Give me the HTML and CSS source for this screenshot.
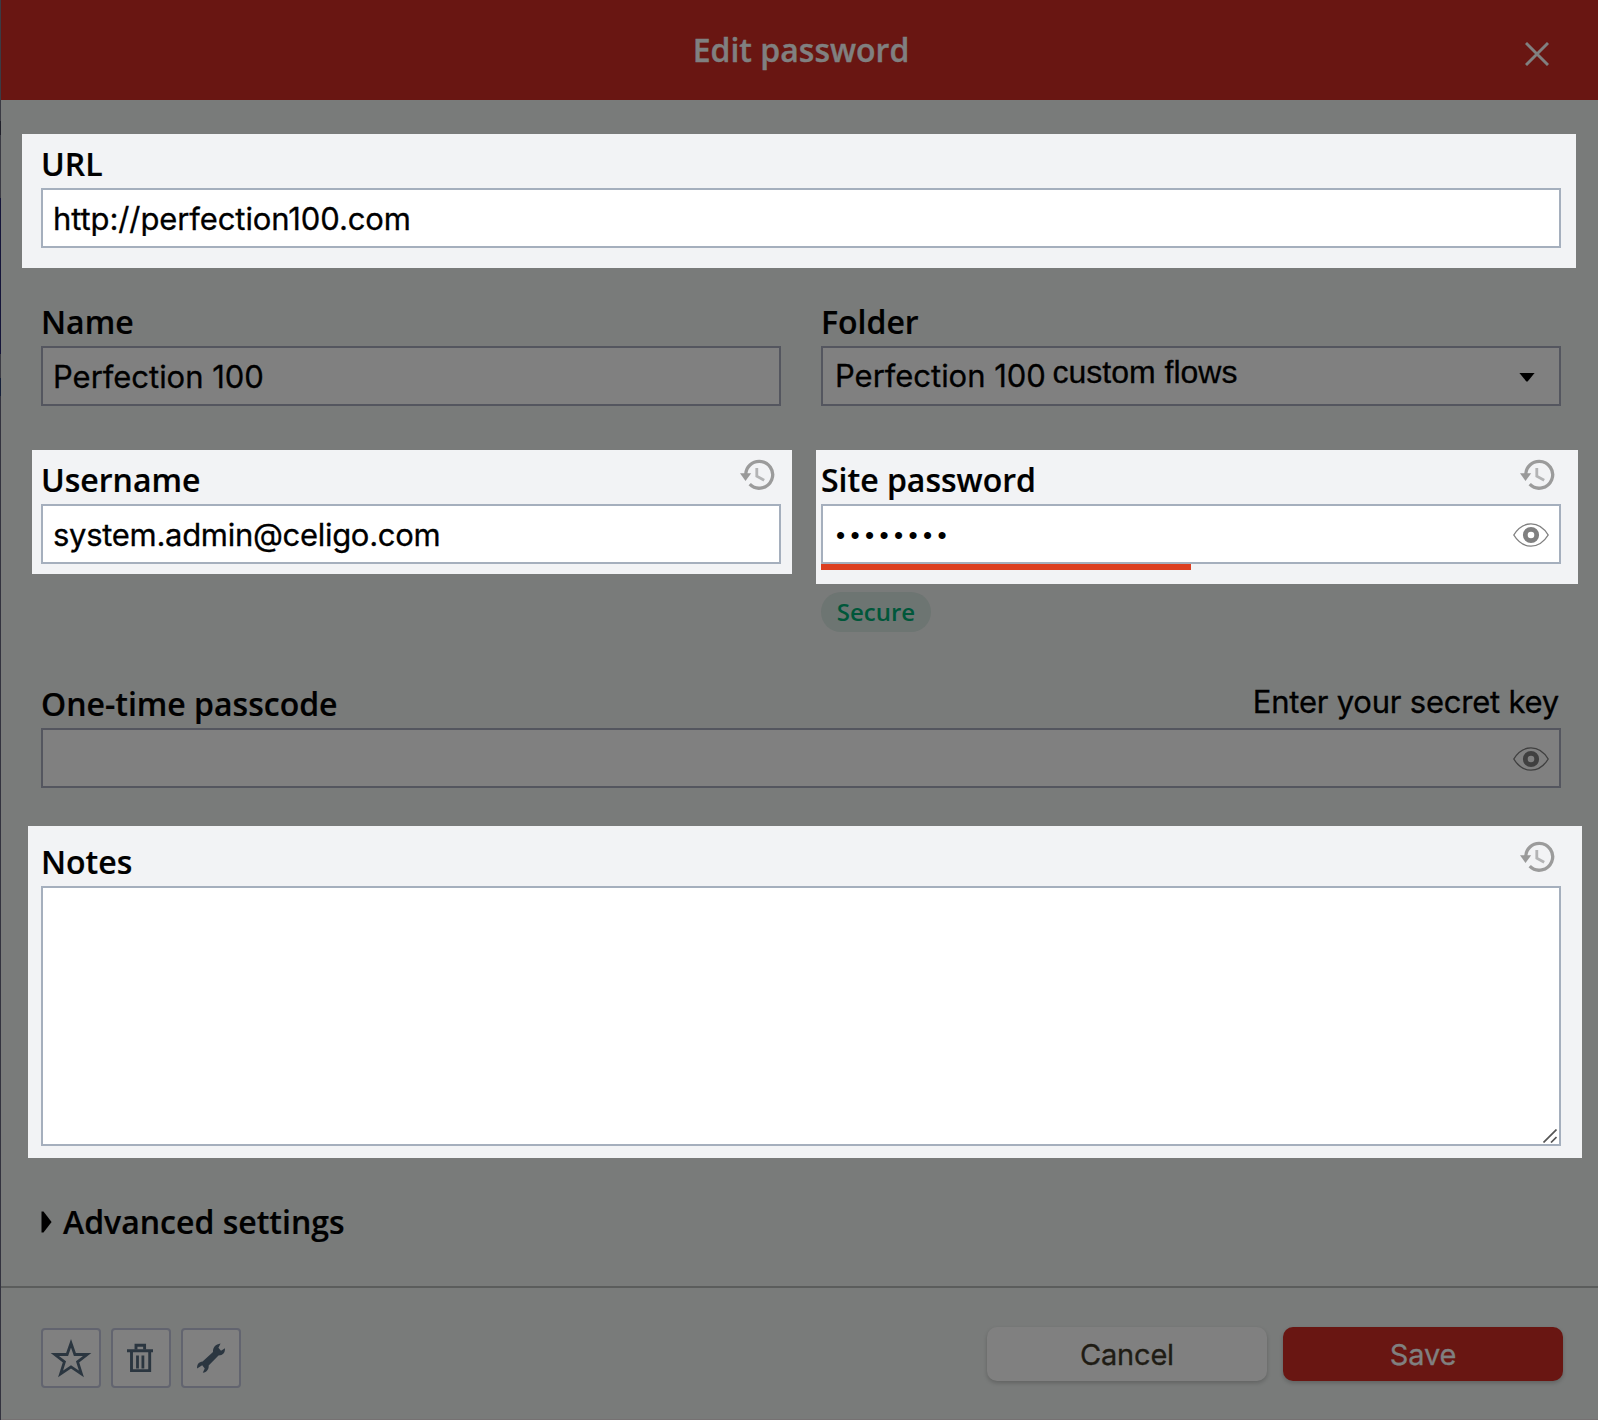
FILE: index.html
```html
<!DOCTYPE html>
<html lang="en">
<head>
<meta charset="utf-8">
<title>Edit password</title>
<link rel="stylesheet" href="styles.css">
</head>
<body>
<svg class="defs" width="0" height="0" aria-hidden="true">
  <symbol id="history" viewBox="0 0 36 32">
    <path d="M5.800 15C6.100 7.900 12.200 2.400 19.100 2.400a13.400 13.400 0 1 1-9.400 22.800" fill="none" stroke="#9b9b9b" stroke-width="3.300"/>
    <path d="M0 14.300h11.200L5.500 22z" fill="#999"/>
    <path d="M16.800 9v8.200l7.400 4" fill="none" stroke="#b3b4b5" stroke-width="2.800"/>
  </symbol>
  <symbol id="eye" viewBox="0 0 36 24">
    <path d="M.8 12C5 5.200 11 .9 18 .9S31 5.200 35.200 12C31 18.800 25 23.100 18 23.100S5 18.800.8 12z" fill="none" stroke="currentColor" stroke-width="1.400" stroke-linejoin="round"/>
    <circle cx="18" cy="12" r="5.700" fill="none" stroke="currentColor" stroke-width="4.800"/>
  </symbol>
</svg>
<main class="dialog">
  <header class="header">
    <h1 class="title">Edit password</h1>
    <svg class="close" viewBox="0 0 24 24"><path d="M1 1l22 22M23 1L1 23" stroke="currentColor" stroke-width="2.900"/></svg>
  </header>

  <section class="panel panel-url">
    <div class="field">
      <div class="label-row"><span class="label">URL</span></div>
      <div class="input url">http://perfection100.com</div>
    </div>
  </section>

  <section class="row row-name">
    <div class="field">
      <div class="label-row"><span class="label">Name</span></div>
      <div class="input dim">Perfection 100</div>
    </div>
    <div class="field">
      <div class="label-row"><span class="label">Folder</span></div>
      <div class="input dim select"><span>Perfection 100 <span class="suffix">custom flows</span></span>
        <svg class="caret" viewBox="0 0 16 9"><path d="M.4 0h15.200L8.600 8.600H7.400z"/></svg>
      </div>
    </div>
  </section>

  <section class="row row-login">
    <div class="panel panel-user">
      <div class="field">
        <div class="label-row"><span class="label">Username</span><svg class="history"><use href="#history"/></svg></div>
        <div class="input tight">system.admin@celigo.com</div>
      </div>
    </div>
    <div class="password-column">
      <div class="panel panel-password">
        <div class="field">
          <div class="label-row"><span class="label">Site password</span><svg class="history"><use href="#history"/></svg></div>
          <div class="input with-eye"><span class="dots">••••••••</span><svg class="eye"><use href="#eye"/></svg></div>
          <div class="strength"></div>
        </div>
      </div>
      <span class="badge">Secure</span>
    </div>
  </section>

  <section class="field field-otp">
    <div class="label-row"><span class="label">One-time passcode</span><span class="hint">Enter your secret key</span></div>
    <div class="input dim with-eye"><span></span><svg class="eye"><use href="#eye"/></svg></div>
  </section>

  <section class="panel panel-notes">
    <div class="field">
      <div class="label-row"><span class="label">Notes</span><svg class="history"><use href="#history"/></svg></div>
      <div class="input notes"><svg class="grip" viewBox="0 0 14 14"><path d="M.5 13.500l13-13M8 13.500l5.500-5.500" stroke="#555" stroke-width="1.700"/></svg></div>
    </div>
  </section>

  <div class="advanced">
    <svg class="arrow" viewBox="0 0 11 22"><path d="M.5.500h2L10.600 11 2.500 21.400h-2z"/></svg>
    <span class="label">Advanced settings</span>
  </div>

  <footer class="footer">
    <div class="tools">
      <span class="tool"><svg viewBox="2 2 56 56"><path d="M30 15.200l3.900 11.300h12.300l-9.600 7.300 3.800 12L30 38.900l-10.400 6.900 3.800-12-9.600-7.300h12.300z" fill="none" stroke="currentColor" stroke-width="2.800"/></svg></span>
      <span class="tool"><svg viewBox="2 2 56 56"><path d="M25 21.500v-4.200h8.600v4.200M20.500 24v18.600h18.200V24" fill="none" stroke="currentColor" stroke-width="2.900"/><path d="M16 21.200h26v3H16zM25.100 27.400h2.800v13.200h-2.800zM30.500 27.400h2.800v13.200h-2.800z" fill="currentColor"/></svg></span>
      <span class="tool"><svg viewBox="2 2 56 56"><path d="M39.600 15.400l-2.200 4.300 2.600 3 4-2.500c.2 4.600-2 7-6.500 7.200L27.700 37.500c.2 4-1.700 6.500-5.900 7.300l1.900-4.300-2.500-3.200-5.100 3.300c-.3-4.200 1.800-6.700 5.500-7L32 23.900c-.2-4.800 2.500-7.700 7.600-8.500z" fill="currentColor"/></svg></span>
    </div>
    <div class="actions">
      <span class="button cancel">Cancel</span>
      <span class="button save">Save</span>
    </div>
  </footer>
</main>
</body>
</html>
```
FILE: styles.css
```css
* { box-sizing: border-box; }

body {
  margin: 0;
  padding-left: 1px;
  height: 1420px;
  overflow: hidden;
  color: #000;
  font-family: Inter, "Liberation Sans", sans-serif;
  background: linear-gradient(#3b3b44 0 121px, #20202a 121px 135px, #3b3b44 135px 198px, #15153a 198px 354px, #3b3b44 354px 378px, #15203a 378px 396px, #33333f 396px);
}

.defs { position: absolute; }

.dialog {
  display: flex;
  flex-direction: column;
  height: 1420px;
  background: #797b7a;
  border-bottom: 1px solid #757172;
}

.header {
  display: grid;
  grid-template-columns: 1fr auto 1fr;
  align-items: center;
  height: 100px;
  flex: none;
  background: #691612;
  color: #808080;
}

.title {
  grid-column: 2;
  margin: 0;
  padding-left: 3px;
  font: 600 32px/44px "Open Sans", sans-serif;
  -webkit-text-stroke: 0.4px currentColor;
}

.close {
  justify-self: end;
  width: 24px;
  height: 24px;
  margin: 8px 49px 0 0;
}

.panel { background: #f2f3f5; }
.panel-url { margin: 34px 22px 0 21px; padding: 8px 15px 20px 19px; }
.panel-user { width: 760px; height: 124px; padding: 8px 11px 10px 9px; }
.panel-password { height: 134px; padding: 8px 17px 14px 5px; }
.panel-notes { margin: 38px 16px 0 27px; padding: 14px 21px 12px 13px; }

.label-row {
  display: flex;
  justify-content: space-between;
  align-items: flex-start;
  height: 46px;
}

.label { font: 600 32px/44px "Open Sans", sans-serif; -webkit-text-stroke: 0.2px currentColor; }
.hint { padding-right: 2px; font-size: 31px; line-height: 40px; letter-spacing: -0.22px; -webkit-text-stroke: 0.3px currentColor; }
.history { width: 36px; height: 32px; margin: 1px 5px 0 0; }

.input {
  height: 60px;
  padding-left: 10px;
  border: 2px solid #a5afbd;
  background: #fff;
  font-size: 31px;
  line-height: 57px;
  letter-spacing: -0.03px;
  white-space: nowrap;
  -webkit-text-stroke: 0.3px currentColor;
}

.input.dim { background: #808080; border-color: #54565f; }
.input.url { letter-spacing: -0.1px; }
.input.tight { letter-spacing: -0.3px; }

.input.select {
  display: flex;
  justify-content: space-between;
  align-items: center;
  padding: 0 24px 0 12px;
  line-height: 56px;
}

.suffix {
  margin-left: -2px;
  font: 32px/1 "Liberation Sans", sans-serif;
  letter-spacing: 0;
  vertical-align: 4px;
}

.caret { width: 16px; height: 9px; margin-top: 3px; }

.input.with-eye {
  display: flex;
  justify-content: space-between;
  align-items: center;
  padding: 0 10px 0 12px;
}

.eye { width: 36px; height: 24px; margin-top: 2px; color: #808080; }
.dim .eye { color: #404040; }

.dots {
  padding: 2px 0 0 1px;
  font-family: "Liberation Sans", sans-serif;
  font-size: 26px;
  letter-spacing: 5.4px;
  -webkit-text-stroke: 0;
}

.strength { width: 370px; height: 6px; background: #dc3f21; }

.input.notes {
  display: flex;
  justify-content: flex-end;
  align-items: flex-end;
  height: 260px;
  padding: 0 2px 1px 0;
}

.grip { width: 14px; height: 14px; }

.row { display: flex; }
.row-name { gap: 40px; margin: 32px 37px 0 40px; }
.row-name .field { flex: 1; }
.row-login { gap: 24px; height: 182px; margin: 44px 20px 0 31px; }
.password-column { flex: 1; }

.badge {
  display: block;
  width: 110px;
  height: 40px;
  margin: 8px 0 0 5px;
  border-radius: 20px;
  background: #6d7572;
  color: #00573a;
  font: 600 24px/40px "Open Sans", sans-serif;
  text-align: center;
}

.field-otp { margin: 50px 37px 0 40px; }

.advanced {
  display: flex;
  align-items: center;
  gap: 11px;
  height: 44px;
  margin: 42px 0 42px 40px;
}

.arrow { width: 11px; height: 22px; }

.footer {
  display: flex;
  justify-content: space-between;
  align-items: flex-start;
  flex: 1;
  padding: 39px 35px 0 40px;
  border-top: 2px solid #5b5d5c;
}

.tools { display: flex; gap: 10px; padding-top: 1px; }

.tool {
  width: 60px;
  height: 60px;
  border: 2px solid #62646f;
  border-radius: 4px;
  background: #808080;
  color: #2b3640;
}

.tool svg { display: block; width: 56px; height: 56px; }

.actions { display: flex; gap: 16px; }

.button {
  width: 280px;
  height: 54px;
  border-radius: 10px;
  box-shadow: 0 2px 4px rgba(0, 0, 0, 0.2);
  font-size: 29px;
  line-height: 56px;
  letter-spacing: -0.2px;
  text-align: center;
  -webkit-text-stroke: 0.3px currentColor;
}

.cancel { background: #808080; color: #1f1c14; }
.save { background: #691612; color: #808080; }
```
